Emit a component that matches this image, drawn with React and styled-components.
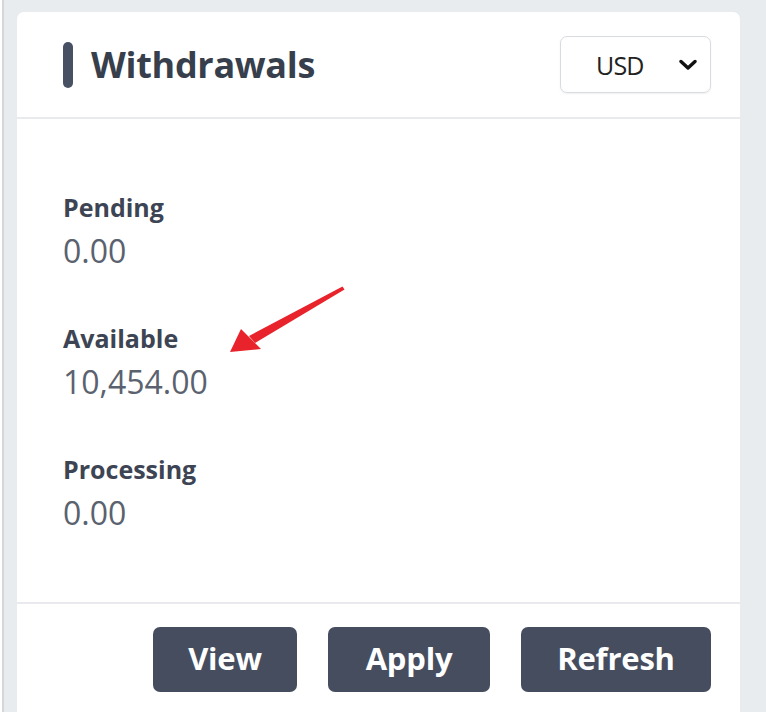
import React from "react";
import styled, { createGlobalStyle } from "styled-components";

const GlobalStyle = createGlobalStyle`
    html, body {
        margin: 0;
        padding: 0;
        background: #ffffff;
    }
    body {
        font-family: "Open Sans", "Liberation Sans", sans-serif;
    }
`;

const Page = styled.div`
    height: 712px;
    overflow: hidden;
    margin-left: 2px;
    border-left: 2px solid #d3d7db;
    background: #e9ecef;
    padding: 12px 26px 0 13px;
    box-sizing: border-box;
`;

const Card = styled.div`
    position: relative;
    background: #ffffff;
    border-radius: 7px 7px 0 0;
    min-height: 760px;
`;

const Header = styled.div`
    display: flex;
    align-items: center;
    justify-content: space-between;
    height: 105px;
    padding: 0 29px 0 46px;
    border-bottom: 2px solid #e8eaed;
`;

const TitleWrap = styled.div`
    display: flex;
    align-items: center;
    gap: 18px;
`;

const Accent = styled.span`
    display: block;
    width: 10px;
    height: 46px;
    border-radius: 5px;
    background: #485063;
`;

const Title = styled.h2`
    margin: 0;
    font-size: 36px;
    line-height: 46px;
    font-weight: 700;
    color: #373e4c;
    letter-spacing: -0.3px;
`;

const Select = styled.div`
    display: flex;
    align-items: center;
    justify-content: space-between;
    width: 151px;
    height: 57px;
    box-sizing: border-box;
    padding: 0 13px 0 35px;
    border: 1px solid #d8dbdf;
    border-radius: 7px;
    box-shadow: 0 1px 2px rgba(0, 0, 0, 0.06);
    font-size: 25px;
    color: #222;
    letter-spacing: -0.8px;
`;

const Body = styled.div`
    display: flex;
    flex-direction: column;
    gap: 51px;
    padding: 72px 46px 69px;
    border-bottom: 2px solid #e8eaed;
`;

const Stat = styled.div`
    display: flex;
    flex-direction: column;
    gap: 8px;
`;

const Label = styled.div`
    font-size: 25px;
    line-height: 32px;
    font-weight: 700;
    color: #3d4453;
`;

const Value = styled.div`
    font-size: 32px;
    line-height: 40px;
    font-weight: 400;
    color: #5a626f;
`;

const Footer = styled.div`
    display: flex;
    justify-content: flex-end;
    gap: 31px;
    padding: 23px 29px 0 46px;
`;

const Button = styled.button`
    width: ${(p) => p.$w}px;
    height: 65px;
    border: none;
    border-radius: 7px;
    background: #454d5f;
    color: #ffffff;
    font-family: "Open Sans", "Liberation Sans", sans-serif;
    font-size: 31px;
    font-weight: 700;
    letter-spacing: -0.2px;
    padding: 0 0 4px;
    cursor: pointer;
`;

const Arrow = styled.svg`
    position: absolute;
    left: 211px;
    top: 273px;
    pointer-events: none;
`;

const Chevron = () => (
    <svg width="18" height="12" viewBox="0 0 18 12">
        <path d="M2 2.5 L9 9 L16 2.5" fill="none" stroke="#111" strokeWidth="3.4" strokeLinecap="round" strokeLinejoin="round" />
    </svg>
);

const stats = [
    { label: "Pending", value: "0.00" },
    { label: "Available", value: "10,454.00" },
    { label: "Processing", value: "0.00" },
];

const App = () => (
    <>
        <GlobalStyle />
        <Page>
            <Card>
                <Header>
                    <TitleWrap>
                        <Accent />
                        <Title>Withdrawals</Title>
                    </TitleWrap>
                    <Select>
                        <span>USD</span>
                        <Chevron />
                    </Select>
                </Header>
                <Body>
                    {stats.map((s) => (
                        <Stat key={s.label}>
                            <Label>{s.label}</Label>
                            <Value>{s.value}</Value>
                        </Stat>
                    ))}
                </Body>
                <Footer>
                    <Button $w={144}>View</Button>
                    <Button $w={162}>Apply</Button>
                    <Button $w={190}>Refresh</Button>
                </Footer>
                <Arrow width="120" height="72" viewBox="0 0 120 72">
                    <polygon points="114.5,1.5 116.5,4.5 27,58 21,51" fill="#e8232b" />
                    <polygon points="2,67 13,44 33,64" fill="#e8232b" />
                </Arrow>
            </Card>
        </Page>
    </>
);

export default App;
